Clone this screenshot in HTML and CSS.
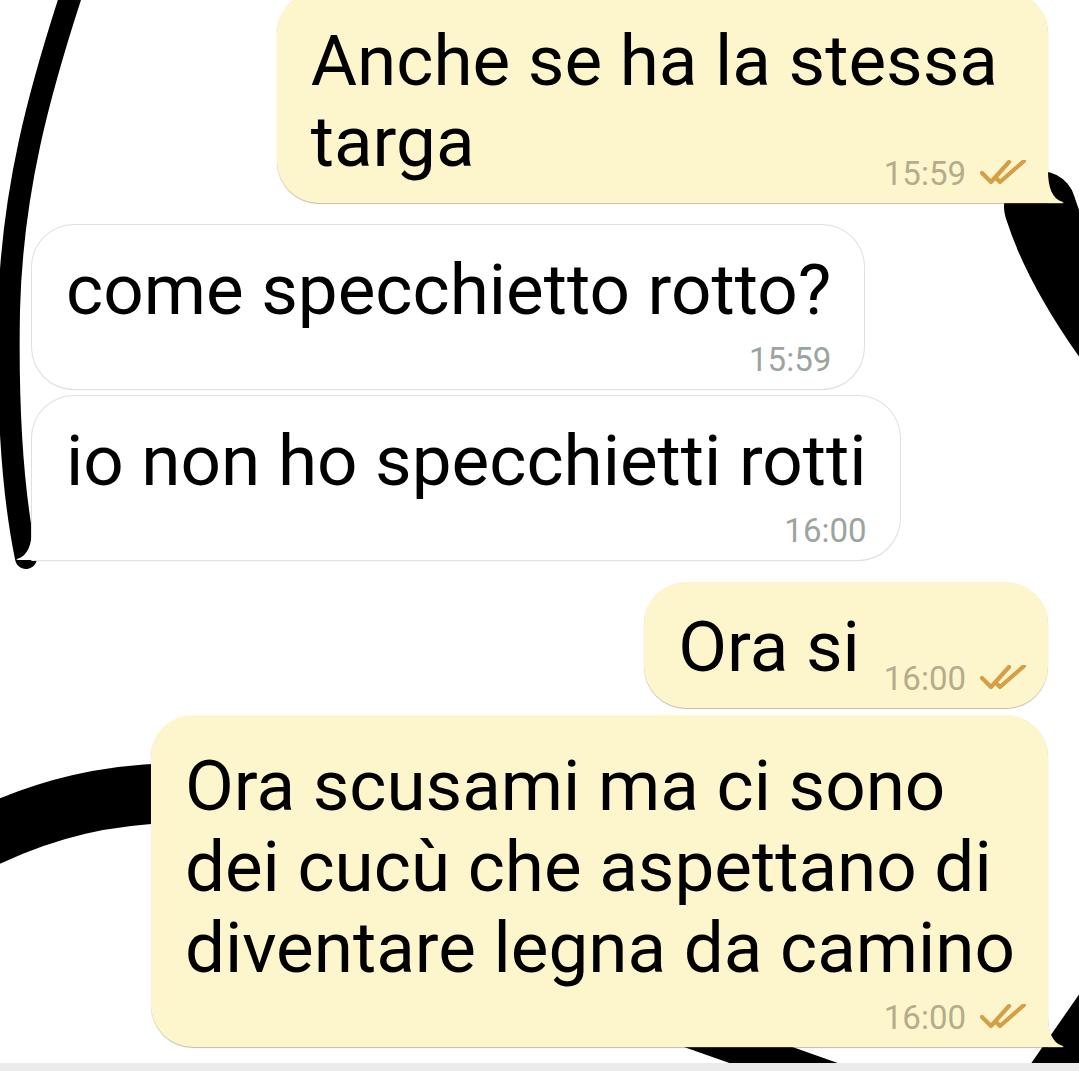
FILE: index.html
```html
<!DOCTYPE html>
<html lang="it">
<head>
  <meta charset="UTF-8" />
  <meta name="viewport" content="width=device-width, initial-scale=1.0"/>
  <title>Chat</title>
  <link rel="stylesheet" href="styles.css">
</head>
<body>
  <!-- sfondo con i tratti neri -->
  <svg class="wallpaper" viewBox="0 0 1079 1071" aria-hidden="true">
    <g fill="none" stroke="#000" stroke-linecap="round">
      <path d="M72,-8 C40,90 12,190 9,310 C7,420 14,500 26,558" stroke-width="22"/>
      <path d="M1040,207 C1052,245 1075,290 1115,345" stroke-width="72"/>
      <path d="M170,793 C110,795 50,806 -20,840" stroke-width="60"/>
      <path d="M690,1030 L860,1090" stroke-width="36"/>
      <path d="M1110,985 L1030,1100" stroke-width="40"/>
    </g>
  </svg>

  <main class="chat">
    <!-- messaggio inviato -->
    <div class="bubble out multi tight">
      <p class="text">Anche se ha la stessa<br>targa</p>
      <div class="meta">
        <span class="time">15:59</span>
        <svg class="ticks" viewBox="0 0 46 25"><path d="M2,13 L11,22 L29,2 M16,18 L20,22 L44,1"/></svg>
      </div>
      <svg class="tail tail-out" viewBox="0 0 16 32"><path d="M0,0 C0,16 4,28 15,31 Q16.5,32 14,32 L0,32 Z"/></svg>
    </div>

    <!-- messaggi ricevuti -->
    <div class="bubble in gap">
      <p class="text">come specchietto rotto?</p>
      <div class="meta"><span class="time">15:59</span></div>
    </div>

    <div class="bubble in cont has-tail-in">
      <p class="text">io non ho specchietti rotti</p>
      <div class="meta"><span class="time">16:00</span></div>
      <svg class="tail tail-in" viewBox="0 0 16 32"><path d="M16,0 C16,16 12,28 1,31 Q-0.5,32 2,32 L16,32 Z"/></svg>
    </div>

    <!-- risposta -->
    <div class="bubble out row gap">
      <p class="text">Ora si</p>
      <div class="meta">
        <span class="time">16:00</span>
        <svg class="ticks" viewBox="0 0 46 25"><path d="M2,13 L11,22 L29,2 M16,18 L20,22 L44,1"/></svg>
      </div>
    </div>

    <div class="bubble out multi cont last has-tail-out">
      <p class="text">Ora scusami ma ci sono<br>dei cucù che aspettano di<br>diventare legna da camino</p>
      <div class="meta">
        <span class="time">16:00</span>
        <svg class="ticks" viewBox="0 0 46 25"><path d="M2,13 L11,22 L29,2 M16,18 L20,22 L44,1"/></svg>
      </div>
      <svg class="tail tail-out" viewBox="0 0 16 32"><path d="M0,0 C0,16 4,28 15,31 Q16.5,32 14,32 L0,32 Z"/></svg>
    </div>
  </main>

  <div class="bottom-bar"></div>
</body>
</html>
```

FILE: styles.css
```css
/* pagina */
body {
  margin: 0;
  height: 1071px;
  overflow: hidden;
  position: relative;
  background: #fff;
  font-family: Roboto, "Noto Sans", sans-serif;
}

/* tratti dello sfondo */
.wallpaper {
  position: absolute;
  top: 0;
  left: 0;
  width: 1079px;
  height: 1071px;
  filter: blur(0.6px);
}

/* lista messaggi */
.chat {
  position: relative;
  display: flex;
  flex-direction: column;
  padding: 0 31px 0 32px;
  margin-top: -9px;
}

/* fumetto base */
.bubble {
  position: relative;
  box-sizing: border-box;
  padding: 24px 33px 9px 34px;
  border-radius: 42px;
  font-size: 71px;
  line-height: 81px;
}

.bubble.multi {
  padding-top: 29px;
}

.bubble.gap {
  margin-top: 22px;
}

.bubble.cont {
  margin-top: 7px;
}

.bubble.last {
  padding-top: 30px;
}

.text {
  margin: 0;
  color: #000;
  white-space: nowrap;
}

/* inviati */
.out {
  align-self: flex-end;
  background: #fdf6cd;
  box-shadow: 0 1px 1px rgba(120, 108, 60, 0.45);
}

/* ricevuti */
.in {
  align-self: flex-start;
  background: #fff;
  box-shadow: 0 0 0 1px #e0e0e0, 0 1px 1px rgba(0, 0, 0, 0.22);
}

.out.tight {
  padding-right: 50px;
  border-bottom-right-radius: 0;
}

.has-tail-out {
  border-bottom-right-radius: 0;
}

.has-tail-in {
  border-bottom-left-radius: 0;
}

/* ora e spunte */
.meta {
  display: flex;
  justify-content: flex-end;
  align-items: flex-start;
  gap: 14px;
  height: 40px;
  margin-top: 10px;
}

.out .meta {
  margin-right: -11px;
}

.tight .meta {
  margin-top: -28px;
  margin-right: -28px;
}

.time {
  font-size: 33px;
  line-height: 40px;
}

.out .time {
  color: #b5ac8c;
}

.in .time {
  color: #9ca49e;
}

.ticks {
  width: 46px;
  height: 25px;
  margin-top: 6px;
}

.ticks path {
  fill: none;
  stroke: #d69f45;
  stroke-width: 4.2;
  stroke-linecap: round;
  stroke-linejoin: round;
}

/* fumetto su una riga sola con l'ora accanto */
.bubble.row {
  display: flex;
  align-items: flex-start;
  gap: 24px;
  padding-right: 22px;
}

.row .meta {
  margin: 53px 0 0 0;
}

/* codine dei fumetti */
.tail {
  position: absolute;
  bottom: 0;
  width: 16px;
  height: 32px;
}

.tail-out {
  right: -16px;
  filter: drop-shadow(0 1px 0.6px rgba(120, 108, 60, 0.5));
}

.tail-out path {
  fill: #fdf6cd;
}

.tail-in {
  left: -16px;
  filter: drop-shadow(0 1px 0.6px rgba(0, 0, 0, 0.3));
}

.tail-in path {
  fill: #fff;
}

/* barra in fondo */
.bottom-bar {
  position: relative;
  margin-top: 16px;
  height: 8px;
  background: #ebebeb;
}
```
